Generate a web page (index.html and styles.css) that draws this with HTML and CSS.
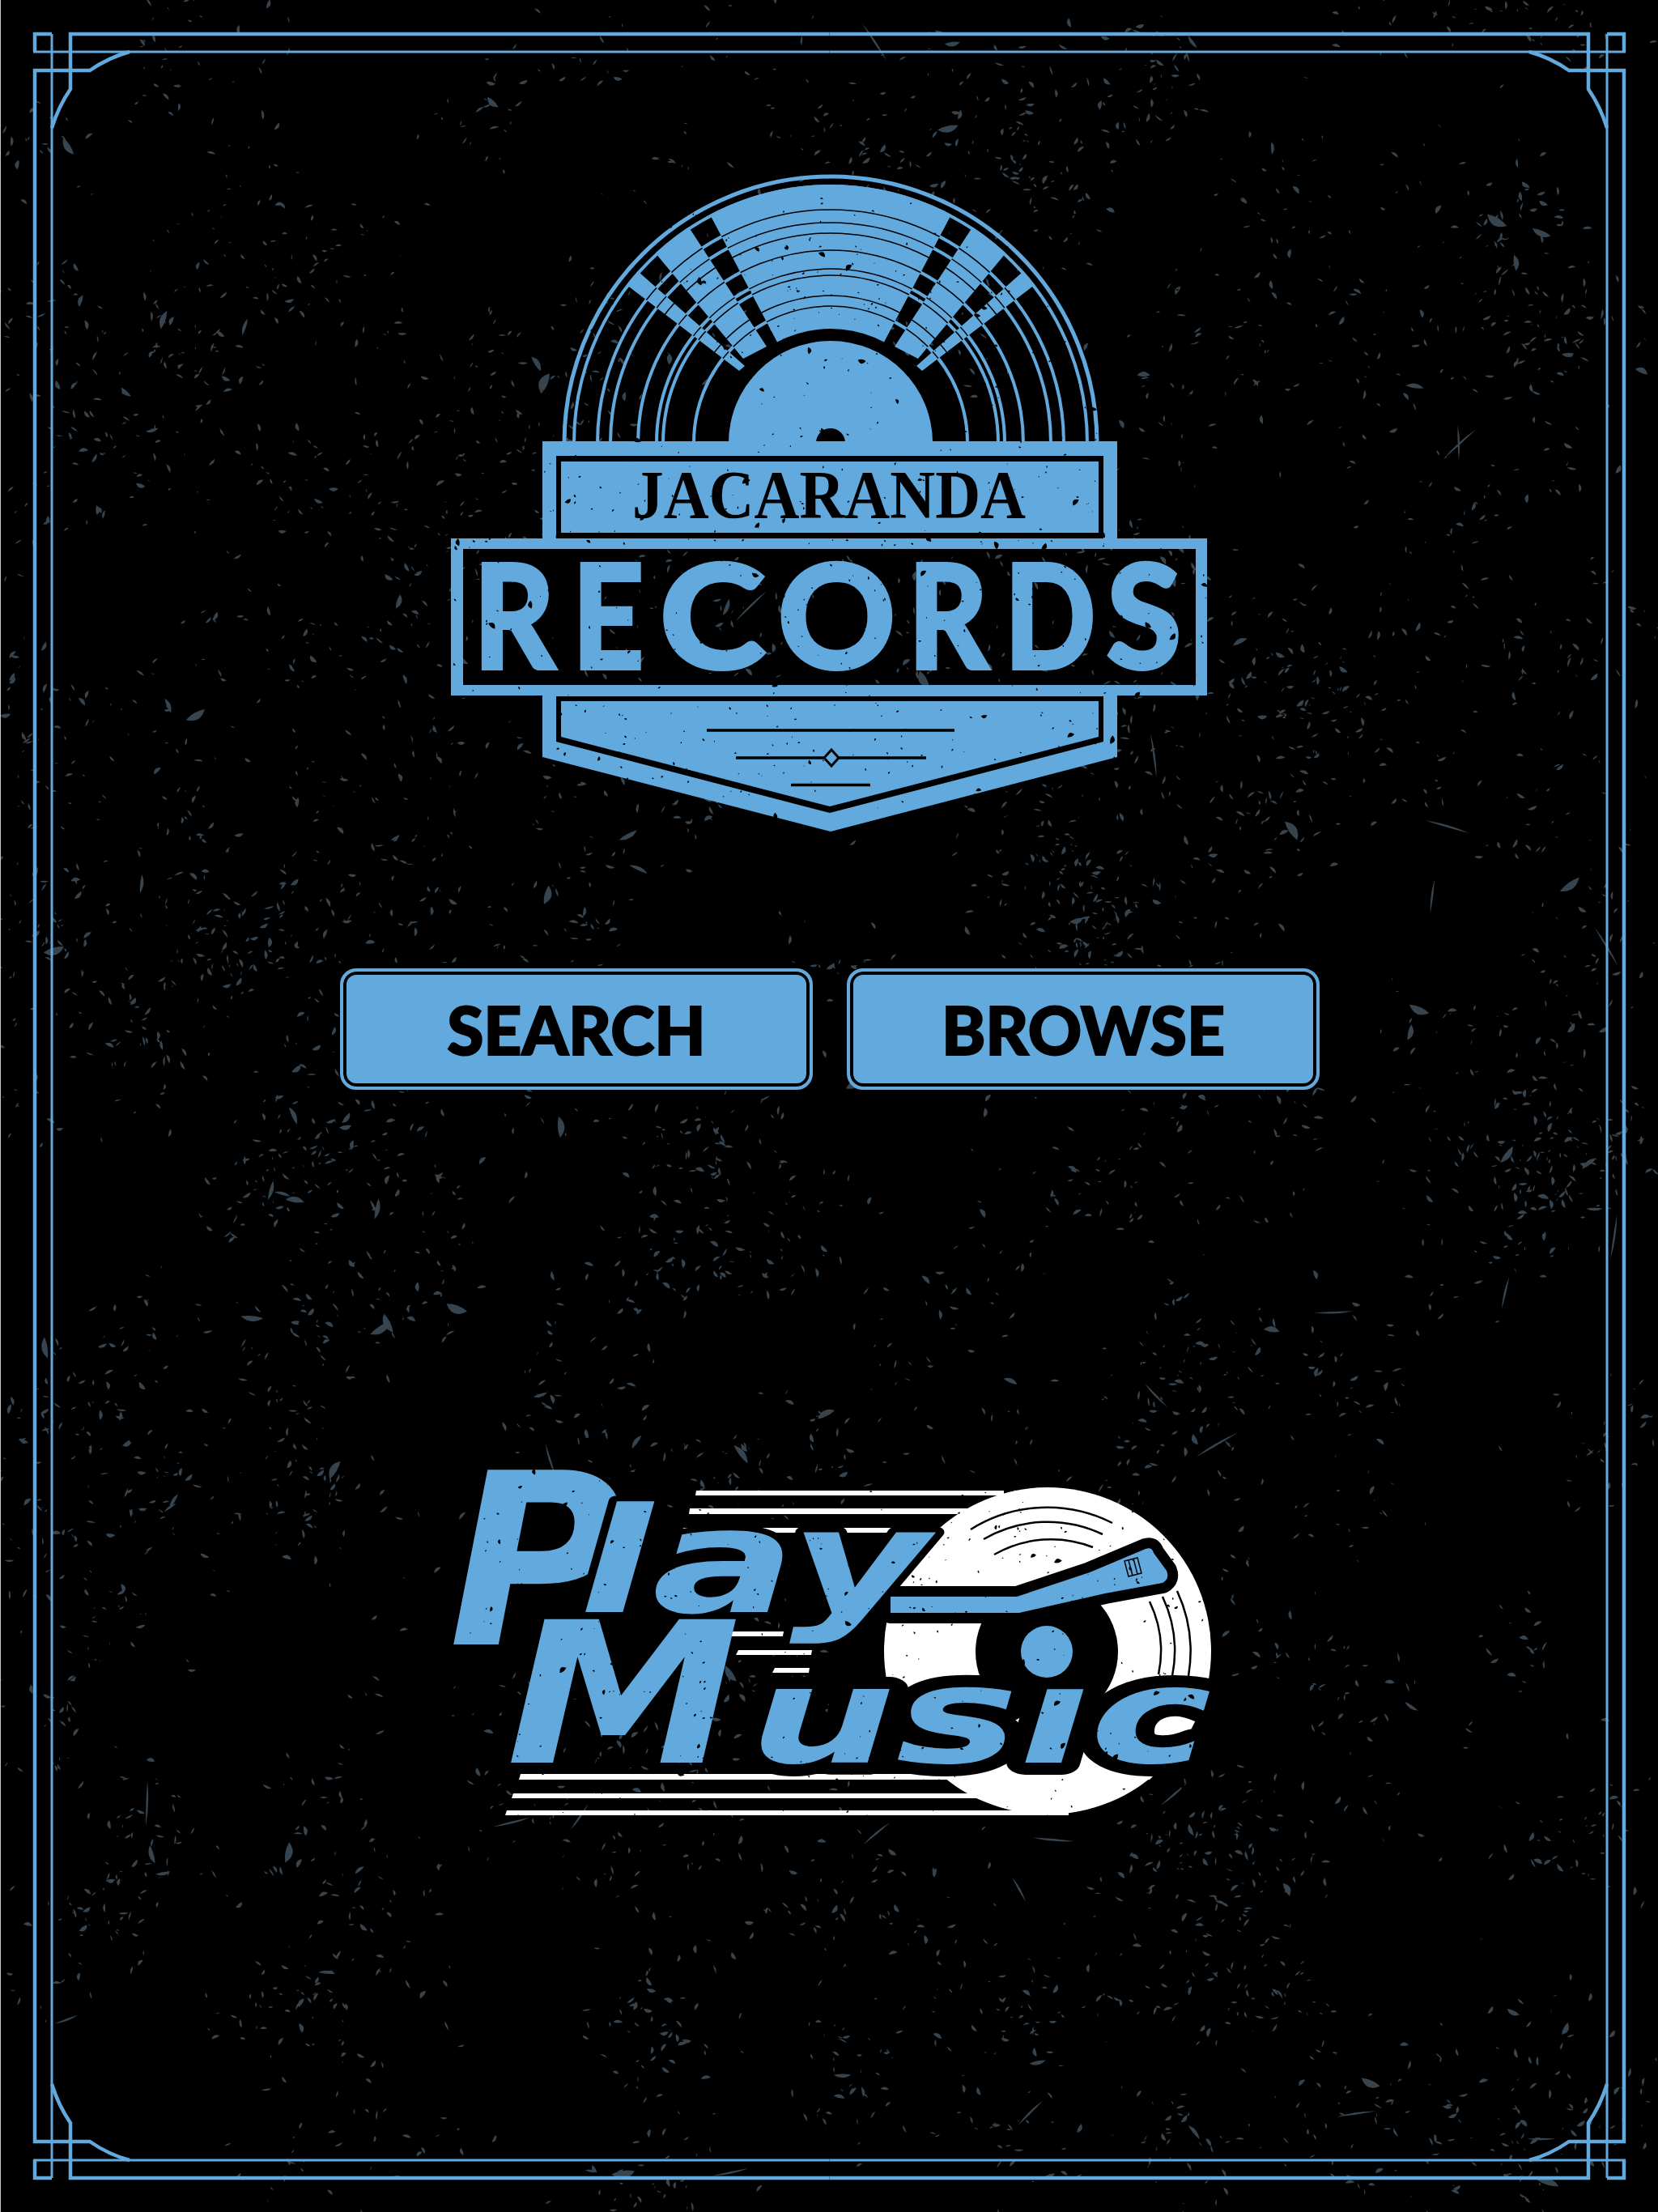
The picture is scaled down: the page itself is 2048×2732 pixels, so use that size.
FILE: index.html
```html
<!DOCTYPE html>
<html lang="en">
<head>
  <meta charset="UTF-8" />
  <title>Jacaranda Records</title>
  <link rel="stylesheet" href="styles.css">
</head>
<body>
  <div class="page">
    <svg class="grain" id="grain" viewBox="0 0 2048 2732"></svg>

    <svg class="frame" viewBox="0 0 2048 2732">
      <defs>
        <g id="corner">
          <path class="frame-thick" d="M43 64V42H64M1024.5 42H87V110Q72 132 64 158M43 1366V87H111Q134 71 160 64"/>
          <path class="frame-thin" d="M41 64H1024.5M64 42V1366"/>
        </g>
      </defs>
      <use href="#corner"/>
      <use href="#corner" transform="translate(2049,0) scale(-1,1)"/>
      <use href="#corner" transform="translate(0,2732) scale(1,-1)"/>
      <use href="#corner" transform="translate(2049,2732) scale(-1,-1)"/>
    </svg>

    <main class="content">
      <svg class="logo" viewBox="539 200 970 860" role="img" aria-label="Jacaranda Records">
        <defs>
          <clipPath id="wedges">
            <polygon points="839,193 1213,193 1087,432 965,432"/>
            <polygon points="840,264 795,295 918,443 947,428"/>
            <polygon points="1212,264 1257,295 1134,443 1105,428"/>
            <polygon points="765,345 780,328 920,452 913,458"/>
            <polygon points="1287,345 1272,328 1132,452 1139,458"/>
          </clipPath>
          <clipPath id="top-half">
            <rect x="680" y="200" width="700" height="347"/>
          </clipPath>
        </defs>

        <!-- record -->
        <g class="grooves" clip-path="url(#top-half)">
          <circle cx="1026" cy="547" r="329" stroke-width="5"/>
          <circle cx="1026" cy="547" r="317"/>
          <circle cx="1026" cy="547" r="288"/>
          <circle cx="1026" cy="547" r="272"/>
          <circle cx="1026" cy="547" r="238"/>
          <circle cx="1026" cy="547" r="215"/>
          <circle cx="1026" cy="547" r="207"/>
          <circle cx="1026" cy="547" r="169"/>
        </g>
        <g clip-path="url(#wedges)">
          <circle class="blue" cx="1026" cy="547" r="319"/>
          <g class="thin-grooves">
            <circle cx="1026" cy="547" r="288"/>
            <circle cx="1026" cy="547" r="272"/>
            <circle cx="1026" cy="547" r="259"/>
            <circle cx="1026" cy="547" r="238"/>
            <circle cx="1026" cy="547" r="215"/>
            <circle cx="1026" cy="547" r="207"/>
            <circle cx="1026" cy="547" r="182"/>
            <circle cx="1026" cy="547" r="169"/>
          </g>
        </g>
        <circle class="dark" cx="1026" cy="547" r="141"/>
        <circle class="blue" cx="1026" cy="547" r="126"/>
        <circle class="dark" cx="1026" cy="547" r="18"/>

        <!-- banners -->
        <rect class="blue" x="670" y="545" width="710" height="120"/>
        <rect class="dark" x="687" y="563" width="676" height="102"/>
        <rect class="blue" x="693" y="570" width="664" height="88"/>
        <text class="jacaranda" x="781" y="640" textLength="486" lengthAdjust="spacingAndGlyphs">JACARANDA</text>

        <path class="blue" fill-rule="evenodd" d="M557 665H1491V859H557ZM572 678V846H1477V678Z"/>
        <text class="records" y="825"><tspan x="585" textLength="100" lengthAdjust="spacingAndGlyphs">R</tspan><tspan x="707" textLength="88" lengthAdjust="spacingAndGlyphs">E</tspan><tspan x="815" textLength="130" lengthAdjust="spacingAndGlyphs">C</tspan><tspan x="961" textLength="145" lengthAdjust="spacingAndGlyphs">O</tspan><tspan x="1122" textLength="98" lengthAdjust="spacingAndGlyphs">R</tspan><tspan x="1241" textLength="112" lengthAdjust="spacingAndGlyphs">D</tspan><tspan x="1367" textLength="92" lengthAdjust="spacingAndGlyphs">S</tspan></text>

        <polygon class="blue" points="670,859 1380,859 1380,935 1026,1027 670,935"/>
        <polygon class="dark" points="687,860 1363,860 1363,916 1025,1004 687,916"/>
        <polygon class="blue" points="693,866 1357,866 1357,910 1025,996 693,910"/>
        <path class="rule" d="M873 902H1179M909 936H1144M977 969.5H1075"/>
        <polygon class="diamond" points="1027,926 1036,936 1027,946 1018,936"/>

        <g class="distress" data-box="560 225 930 800" data-count="1100" data-seed="11"></g>
      </svg>

      <nav class="menu">
        <button class="menu-btn">SEARCH</button>
        <button class="menu-btn">BROWSE</button>
      </nav>

      <svg class="play-music" viewBox="524 1790 1000 480" role="img" aria-label="Play Music">
        <!-- disc -->
        <circle class="white" cx="1294" cy="2039" r="202"/>
        <path class="arc" d="M1199 1889A178 178 0 0 1 1374 1881M1215 1901A158 158 0 0 1 1362 1895M1228 1920A141 141 0 0 1 1350 1911M1454 1965A178 178 0 0 1 1468 2070M1436 1972A158 158 0 0 1 1448 2070M1420 1978A141 141 0 0 1 1431 2068"/>
        <circle class="dark" cx="1293" cy="2040" r="88"/>

        <!-- speed lines -->
        <g class="white">
          <polygon points="860,1841 1240,1841 1240,1847 859,1847"/>
          <polygon points="852,1863 1220,1863 1220,1870 851,1870"/>
          <polygon points="844,1887 1190,1887 1190,1893 842,1893"/>
          <polygon points="877,2015 1008,2015 1007,2021 874,2021"/>
          <polygon points="912,2038 1003,2038 1002,2044 909,2044"/>
          <polygon points="957,2060 1000,2060 999,2066 954,2066"/>
          <polygon points="643,2191 1427,2191 1420,2198 641,2198"/>
          <polygon points="634,2215 1380,2215 1380,2221 632,2221"/>
          <polygon points="626,2236 1320,2236 1320,2242 624,2242"/>
        </g>

        <!-- tonearm -->
        <path class="arm-outline" d="M1100 1972H1256L1346 1942L1415 1913Q1423 1910 1425 1918L1441 1940Q1445 1950 1436 1955L1365 1968L1259 1992H1100Z"/>

        <text class="wordmark">
          <tspan class="wm-cap" x="554" y="2031">P</tspan><tspan class="wm-lay" x="715" y="1991" textLength="432" lengthAdjust="spacingAndGlyphs">lay</tspan>
        </text>

        <path class="arm" d="M1100 1972H1256L1346 1942L1415 1913Q1423 1910 1425 1918L1441 1940Q1445 1950 1436 1955L1365 1968L1259 1992H1100Z"/>
        <path class="cartridge" d="M1389 1928L1405 1924L1410 1943L1394 1947ZM1394 1927L1399 1946M1400 1925L1405 1944"/>

        <text class="wordmark">
          <tspan class="wm-cap2" x="625" y="2177" textLength="290" lengthAdjust="spacingAndGlyphs">M</tspan><tspan class="wm-usic" x="925" y="2177" textLength="572" lengthAdjust="spacingAndGlyphs">usic</tspan>
        </text>
        <!-- the disc's spindle stands in for the dot of the i -->
        <rect class="dark" x="1262" y="2042" width="100" height="42"/>
        <circle class="blue" cx="1293" cy="2040" r="32"/>

        <g class="distress" data-box="560 1815 940 430" data-count="520" data-seed="29"></g>
      </svg>
    </main>
  </div>
  <script src="grain.js"></script>
</body>
</html>
```

FILE: styles.css
```css
* { box-sizing: border-box; }
body { margin: 0; background: #000; }
.page {
  position: relative;
  width: 2048px;
  height: 2732px;
  overflow: hidden;
  background: #000;
}
.grain, .frame {
  position: absolute;
  top: 0;
  left: 0;
  width: 2048px;
  height: 2732px;
}
.grain { fill: #36444f; }
.frame { box-shadow: inset 1px 0 0 #c8c8c8; }
.frame-thick, .frame-thin { fill: none; stroke: #62a9de; }
.frame-thick { stroke-width: 4.5; }
.frame-thin { stroke-width: 3; }

.content {
  position: relative;
  display: flex;
  flex-direction: column;
  align-items: center;
  padding-top: 200px;
}
.logo { display: block; width: 970px; height: 860px; }
.play-music { display: block; width: 1000px; height: 480px; margin-top: 444px; }

.blue { fill: #62a9de; }
.dark { fill: #000; }
.white { fill: #fff; }
.grooves { fill: none; stroke: #62a9de; stroke-width: 4; }
.thin-grooves { fill: none; stroke: #000; stroke-width: 1.5; }
.rule { fill: none; stroke: #000; stroke-width: 3.5; }
.diamond { fill: #62a9de; stroke: #000; stroke-width: 3; }
.jacaranda {
  font-family: "Liberation Serif", serif;
  font-weight: 700;
  font-size: 85px;
  fill: #000;
}
.records {
  font-family: Lato, sans-serif;
  font-weight: 700;
  font-size: 177px;
  fill: #62a9de;
  stroke: #62a9de;
  stroke-width: 6px;
}

.menu {
  display: flex;
  gap: 42px;
  margin-top: 136px;
  padding-left: 2px;
}
.menu-btn {
  width: 584px;
  height: 150px;
  padding: 0;
  border: 4px solid #62a9de;
  border-radius: 20px;
  background: #62a9de;
  box-shadow: inset 0 0 0 4px #000;
  color: #000;
  font-family: Lato, sans-serif;
  font-weight: 900;
  font-size: 82px;
  -webkit-text-stroke: 2px #000;
  cursor: pointer;
}

.wordmark {
  font-family: "DejaVu Sans", sans-serif;
  font-weight: 700;
  font-style: italic;
  fill: #62a9de;
  stroke-linejoin: round;
  paint-order: stroke;
}
.wm-cap { font-size: 296px; }
.wm-cap2 { font-size: 243px; }
.wm-lay { font-size: 180px; stroke: #000; stroke-width: 14px; }
.wm-usic { font-size: 165px; stroke: #000; stroke-width: 30px; }
.arm { fill: #62a9de; }
.arm-outline { fill: #000; stroke: #000; stroke-width: 26; stroke-linejoin: round; }
.cartridge { fill: none; stroke: #000; stroke-width: 1.5; }
.arc { fill: none; stroke: #000; stroke-width: 2.5; }
.distress { fill: #000; }
```

FILE: grain.js
```js
// seeded so the texture comes out the same on every load
function makeRandom(seed) {
  return function () {
    seed = (seed + 0x6d2b79f5) | 0;
    let t = Math.imul(seed ^ (seed >>> 15), 1 | seed);
    t = (t + Math.imul(t ^ (t >>> 7), 61 | t)) ^ t;
    return ((t ^ (t >>> 14)) >>> 0) / 4294967296;
  };
}

function sliver(x, y, len, wide, angle) {
  const dx = Math.cos(angle) * len / 2, dy = Math.sin(angle) * len / 2;
  const nx = -Math.sin(angle) * wide, ny = Math.cos(angle) * wide;
  const a = `${(x - dx).toFixed(1)} ${(y - dy).toFixed(1)}`;
  const b = `${(x + dx).toFixed(1)} ${(y + dy).toFixed(1)}`;
  return `M${a}Q${(x + nx).toFixed(1)} ${(y + ny).toFixed(1)} ${b}Q${(x - nx / 3).toFixed(1)} ${(y - ny / 3).toFixed(1)} ${a}Z`;
}

function drawGrain() {
  const rand = makeRandom(7);
  const spread = () => (rand() + rand() + rand() - 1.5) * 80;
  let d = '';
  for (let c = 0; c < 420; c++) {
    const cx = rand() * 2048, cy = rand() * 2732;
    const count = 4 + Math.floor(rand() * 20);
    for (let i = 0; i < count; i++) {
      const big = rand();
      const len = big > 0.985 ? 14 + rand() * 16 : 3.5 + rand() * 9;
      d += sliver(cx + spread(), cy + spread(), len, len * (0.25 + rand() * 0.4), rand() * Math.PI * 2);
    }
  }
  // a few long scratches
  for (let i = 0; i < 30; i++) {
    d += sliver(rand() * 2048, rand() * 2732, 30 + rand() * 30, 4, rand() * Math.PI * 2);
  }
  const path = document.createElementNS('http://www.w3.org/2000/svg', 'path');
  path.setAttribute('d', d);
  document.getElementById('grain').appendChild(path);
}

function drawDistress(group) {
  const [x, y, w, h] = group.dataset.box.split(' ').map(Number);
  const rand = makeRandom(Number(group.dataset.seed));
  const total = Number(group.dataset.count);
  let d = '';
  for (let i = 0; i < total; i++) {
    const size = rand() > 0.9 ? 4 + rand() * 7 : 1.5 + rand() * 2.5;
    d += sliver(x + rand() * w, y + rand() * h, size, size * 0.8, rand() * Math.PI * 2);
  }
  const path = document.createElementNS('http://www.w3.org/2000/svg', 'path');
  path.setAttribute('d', d);
  group.appendChild(path);
}

drawGrain();
document.querySelectorAll('.distress').forEach(drawDistress);
```
